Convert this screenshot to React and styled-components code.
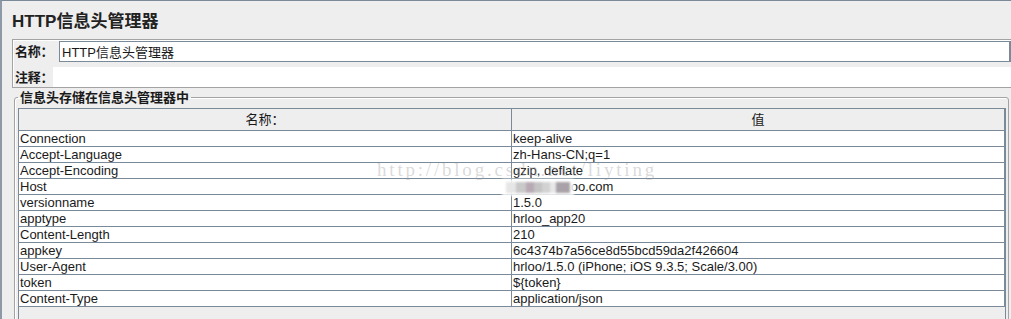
import React from 'react';
import styled, { createGlobalStyle } from 'styled-components';

const GlobalStyle = createGlobalStyle`
  body {
    margin: 0;
    background: #eeeeee;
    font-family: "Liberation Sans", "Noto Sans CJK SC", sans-serif;
  }
`;

const Frame = styled.div`
  position: relative;
  width: 1011px;
  height: 319px;
  box-sizing: border-box;
  overflow: hidden;
  background: #eeeeee;
  border-top: 1px solid #7a8a99;
  border-left: 2px solid #8d99a6;
  color: #1a1a1a;
`;

const Title = styled.h1`
  margin: 11px 0 0 10px;
  height: 20px;
  line-height: 20px;
  font-size: 17px;
  font-weight: bold;
  color: #222;
`;

const NamePanel = styled.div`
  margin: 7px 0 0 10px;
  width: 1000px;
  height: 49px;
  box-sizing: border-box;
  padding: 1px 0 0 1px;
  border: 1px solid #a3a3a3;
  border-right: none;
  box-shadow: inset 1px 1px 0 #fff;
`;

const Row = styled.div`
  display: flex;
  align-items: center;
  height: ${({ h }) => h}px;
  margin-top: ${({ gap }) => gap || 0}px;
`;

const Label = styled.span`
  width: ${({ w }) => w}px;
  flex: none;
  box-sizing: border-box;
  padding-left: 1px;
  font-size: 13px;
  font-weight: bold;
  line-height: 15px;
  white-space: nowrap;
  letter-spacing: -0.3px;
`;

const TextInput = styled.input`
  width: 952px;
  height: 21px;
  box-sizing: border-box;
  margin: 0;
  padding: 0 2px;
  border: 1px solid #7a8a99;
  border-right-width: 2px;
  background: #fff;
  font-family: inherit;
  font-size: 13px;
  color: #1a1a1a;
  outline: none;
`;

const NoteField = styled.div`
  flex: 1;
  height: 20px;
  background: #fff;
`;

const Group = styled.fieldset`
  margin: 2px 0 0 12px;
  width: 995px;
  height: 250px;
  box-sizing: border-box;
  padding: 3px 2px 0 3px;
  border: 1px solid #a3a3a3;
  border-radius: 3px;
  box-shadow: inset 1px 1px 0 #fff;
`;

const Legend = styled.legend`
  padding: 0 2px;
  height: 15px;
  line-height: 15px;
  font-size: 13px;
  font-weight: bold;
  color: #1a1a1a;
`;

const ScrollPane = styled.div`
  width: 988px;
  height: 240px;
  box-sizing: border-box;
  border: 1px solid #7a8a99;
  background: #eeeeee;
`;

const Table = styled.table`
  width: 986px;
  table-layout: fixed;
  border-collapse: separate;
  border-spacing: 0;
  font-size: 13px;
`;

const HeadCell = styled.th`
  height: 21px;
  padding: 0;
  line-height: 21px;
  font-weight: normal;
  text-align: center;
  background: #eeeeee;
  border-right: 1px solid #7a8a99;
  border-bottom: 1px solid #7a8a99;
`;

const Cell = styled.td`
  height: 15px;
  padding: 0 0 0 1px;
  line-height: 15px;
  white-space: nowrap;
  overflow: hidden;
  background: #fff;
  border-right: 1px solid #7a8a99;
  border-bottom: 1px solid #7a8a99;
`;

const Watermark = styled.div`
  position: absolute;
  left: 375px;
  top: 158px;
  font-family: "Liberation Serif", serif;
  font-size: 19px;
  letter-spacing: 2.8px;
  line-height: 22px;
  color: rgba(160, 160, 160, 0.4);
  pointer-events: none;
`;

const Mosaic = styled.div`
  position: absolute;
  left: 500px;
  top: 178px;
  display: flex;
  align-items: center;
  padding: 3px 4px;
  background: rgba(255, 255, 255, 0.85);
  filter: blur(1.2px);
`;

const Tile = styled.span`
  width: ${({ w }) => w}px;
  height: 11px;
  background: ${({ c }) => c};
`;

const HEADERS = [
  ['Connection', 'keep-alive'],
  ['Accept-Language', 'zh-Hans-CN;q=1'],
  ['Accept-Encoding', 'gzip, deflate'],
  ['Host', 'hrloo.com'],
  ['versionname', '1.5.0'],
  ['apptype', 'hrloo_app20'],
  ['Content-Length', '210'],
  ['appkey', '6c4374b7a56ce8d55bcd59da2f426604'],
  ['User-Agent', 'hrloo/1.5.0 (iPhone; iOS 9.3.5; Scale/3.00)'],
  ['token', '${token}'],
  ['Content-Type', 'application/json'],
];

const TILES = [
  ['#e6e6e6', 10],
  ['#c9c9c9', 10],
  ['#b7aab4', 8],
  ['#c4c4c4', 8],
  ['#d2d2d2', 8],
  ['#e8e8e8', 6],
  ['#a9a2a8', 14],
];

export default function App() {
  return (
    <>
      <GlobalStyle />
      <Frame>
        <Title>HTTP信息头管理器</Title>
        <NamePanel>
          <Row h={21}>
            <Label w={45}>名称：</Label>
            <TextInput readOnly defaultValue="HTTP信息头管理器" />
          </Row>
          <Row h={20} gap={5}>
            <Label w={39}>注释：</Label>
            <NoteField />
          </Row>
        </NamePanel>
        <Group>
          <Legend>信息头存储在信息头管理器中</Legend>
          <ScrollPane>
            <Table>
              <thead>
                <tr>
                  <HeadCell>名称：</HeadCell>
                  <HeadCell>值</HeadCell>
                </tr>
              </thead>
              <tbody>
                {HEADERS.map(([name, value]) => (
                  <tr key={name}>
                    <Cell>{name}</Cell>
                    <Cell>{name === 'Host' ? <>&nbsp;&nbsp;&nbsp;&nbsp;&nbsp;&nbsp;&nbsp;&nbsp;&nbsp;&nbsp;&nbsp;&nbsp;&nbsp;&nbsp;&nbsp;&nbsp;oo.com</> : value}</Cell>
                  </tr>
                ))}
              </tbody>
            </Table>
          </ScrollPane>
        </Group>
        <Watermark>http://blog.csdn.net/liyting</Watermark>
        <Mosaic>
          {TILES.map(([c, w], i) => (
            <Tile key={i} c={c} w={w} />
          ))}
        </Mosaic>
      </Frame>
    </>
  );
}
